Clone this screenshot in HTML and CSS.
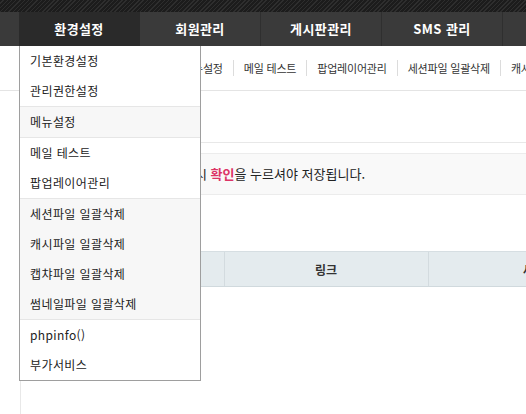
FILE: index.html
```html
<!DOCTYPE html>
<html lang="ko">
<head>
<meta charset="utf-8">
<title>메뉴설정</title>
<link rel="stylesheet" href="styles.css">
</head>
<body>
<div class="topbar"></div>
<nav class="gnb">
  <ul class="gnb-list">
    <li class="gnb-item is-active">
      <a class="gnb-link">환경설정</a>
      <div class="dropdown">
        <div class="dd-grp">
          <a class="dd-link">기본환경설정</a>
          <a class="dd-link">관리권한설정</a>
        </div>
        <div class="dd-grp dd-grp-alt">
          <a class="dd-link">메뉴설정</a>
        </div>
        <div class="dd-grp">
          <a class="dd-link">메일 테스트</a>
          <a class="dd-link">팝업레이어관리</a>
        </div>
        <div class="dd-grp dd-grp-alt">
          <a class="dd-link">세션파일 일괄삭제</a>
          <a class="dd-link">캐시파일 일괄삭제</a>
          <a class="dd-link">캡챠파일 일괄삭제</a>
          <a class="dd-link">썸네일파일 일괄삭제</a>
        </div>
        <div class="dd-grp">
          <a class="dd-link">phpinfo()</a>
          <a class="dd-link">부가서비스</a>
        </div>
      </div>
    </li>
    <li class="gnb-item"><a class="gnb-link">회원관리</a></li>
    <li class="gnb-item"><a class="gnb-link">게시판관리</a></li>
    <li class="gnb-item"><a class="gnb-link">SMS 관리</a></li>
    <li class="gnb-item"><a class="gnb-link">쇼핑몰관리</a></li>
  </ul>
</nav>
<div class="snb">
  <ul class="snb-list">
    <li class="snb-item">기본환경설정</li>
    <li class="snb-item">관리권한설정</li>
    <li class="snb-item">메뉴설정</li>
    <li class="snb-item">메일 테스트</li>
    <li class="snb-item">팝업레이어관리</li>
    <li class="snb-item">세션파일 일괄삭제</li>
    <li class="snb-item">캐시파일 일괄삭제</li>
    <li class="snb-item">캡챠파일 일괄삭제</li>
  </ul>
</div>
<main class="content">
  <h1 class="page-title">메뉴설정</h1>
  <div class="notice">
    <p><strong>주의!</strong> 메뉴설정 작업 후 반드시 <strong class="hl">확인</strong>을 누르셔야 저장됩니다.</p>
  </div>
  <table class="tbl">
    <colgroup>
      <col class="c1"><col class="c2"><col class="c3"><col class="c4"><col class="c5">
    </colgroup>
    <thead>
      <tr>
        <th>메뉴</th>
        <th>링크</th>
        <th>새창</th>
        <th>순서</th>
        <th>관리</th>
      </tr>
    </thead>
  </table>
</main>
</body>
</html>
```
FILE: styles.css
```css
html, body {
  margin: 0;
  padding: 0;
}
body {
  width: 526px;
  height: 414px;
  overflow: hidden;
  background: #fff;
  font-family: "Noto Sans CJK KR", "Noto Sans", sans-serif;
  font-size: 12px;
  color: #222;
}
ul {
  list-style: none;
  margin: 0;
  padding: 0;
}
a {
  text-decoration: none;
  color: inherit;
}

.topbar {
  height: 12px;
  background: repeating-linear-gradient(135deg, #1c1c1c 0 2px, #2e2e2e 2px 3px);
}

.gnb {
  height: 34px;
  background: #3a3a3a;
}
.gnb-list {
  display: flex;
  margin-left: 19px;
  height: 34px;
}
.gnb-item {
  position: relative;
  flex: 0 0 120px;
  border-right: 1px solid #2f2f2f;
  height: 34px;
}
.gnb-item.is-active {
  background: #2a2a2a;
  border-right-color: #2a2a2a;
}
.gnb-link {
  display: block;
  height: 34px;
  line-height: 33px;
  text-align: center;
  color: #fff;
  font-size: 13px;
  font-weight: bold;
  letter-spacing: 0.4px;
  white-space: nowrap;
}

.dropdown {
  position: absolute;
  top: 34px;
  left: 0;
  width: 180px;
  background: #fff;
  border: 1px solid #9e9e9e;
  border-top: 0;
  z-index: 10;
}
.dd-grp {
  border-top: 1px solid #e6e6e6;
}
.dd-grp:first-child {
  border-top: 0;
}
.dd-grp-alt {
  background: #f7f7f7;
}
.dd-link {
  display: block;
  height: 30px;
  line-height: 30px;
  padding-left: 10px;
  font-size: 12px;
  letter-spacing: 0.4px;
  color: #222;
  white-space: nowrap;
}

.snb {
  height: 44px;
  border-bottom: 1px solid #e4e4e4;
  padding-left: 12px;
  white-space: nowrap;
}
.snb-list {
  display: flex;
  align-items: center;
  height: 44px;
}
.snb-item {
  position: relative;
  padding: 0 10px;
  font-size: 11px;
  letter-spacing: -0.2px;
  color: #333;
  line-height: 16px;
  flex: 0 0 auto;
}
.snb-item + .snb-item {
  border-left: 1px solid #dcdcdc;
}

.content {
  margin-left: 20px;
  border-left: 1px solid #e8e8e8;
  height: 400px;
}
.page-title {
  margin: 0;
  height: 51px;
  line-height: 51px;
  padding-left: 20px;
  font-size: 16px;
  font-weight: bold;
  border-bottom: 1px solid #e8e8e8;
}
.notice {
  margin-top: 10px;
  height: 40px;
  background: #f9f9f9;
  border-top: 1px solid #ececec;
  border-bottom: 1px solid #ececec;
  padding-left: 23px;
  white-space: nowrap;
}
.notice p {
  margin: 0;
  line-height: 40px;
  font-size: 13px;
  color: #222;
}
.hl {
  color: #dc3466;
}

.tbl {
  margin-top: 56px;
  border-collapse: collapse;
  table-layout: fixed;
  width: 900px;
}
.c1 { width: 203px; }
.c2 { width: 204px; }
.c3 { width: 212px; }
.c4 { width: 140px; }
.c5 { width: 141px; }
.tbl th {
  height: 34px;
  padding: 0;
  background: #e4ebee;
  border-top: 1px solid #d6dee2;
  border-bottom: 1px solid #d0d9dd;
  border-left: 1px solid #d3dbdf;
  font-size: 12px;
  font-weight: bold;
  color: #333;
  text-align: center;
}
.tbl th:first-child {
  border-left: 0;
}
```
